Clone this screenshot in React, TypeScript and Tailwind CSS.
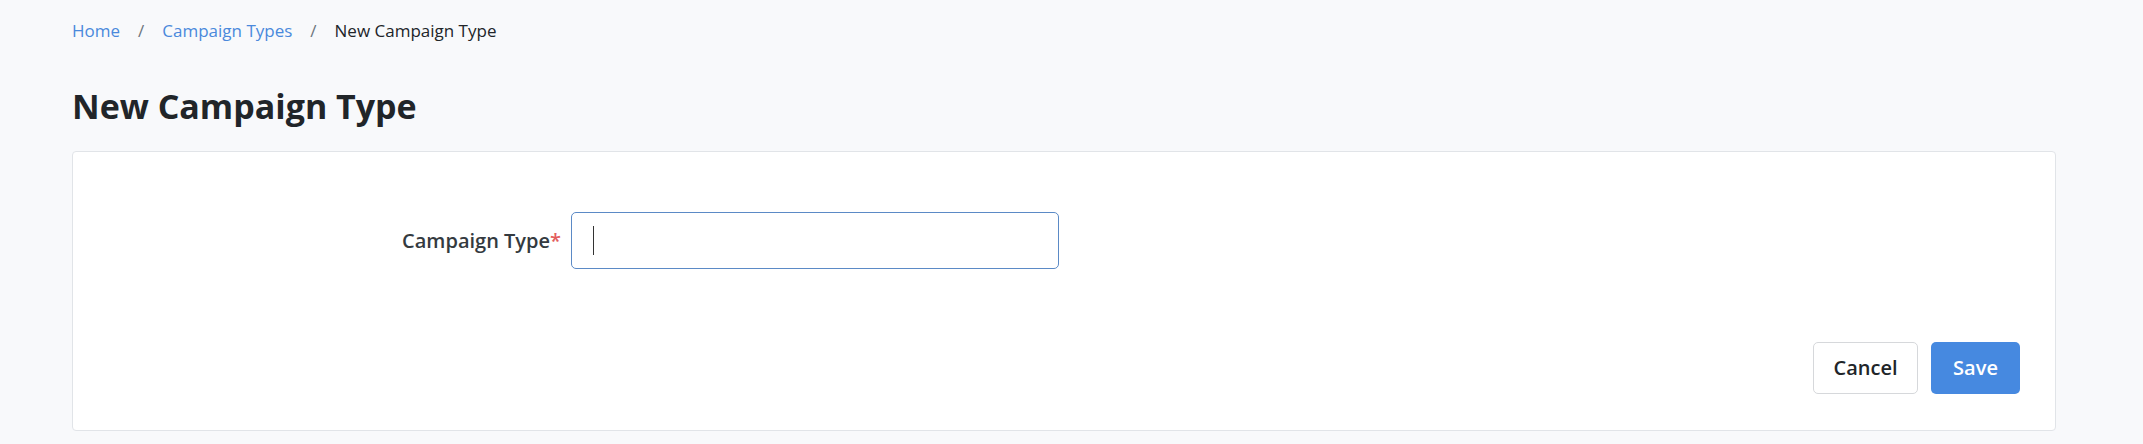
export default function App() {
  const font = { fontFamily: '"Open Sans", "Noto Sans", "Liberation Sans", sans-serif' };
  return (
    <div className="min-h-[444px] w-full bg-[#f8f9fb] pl-[72px] pr-[87px] pt-[19px]" style={font}>
      <nav className="flex h-[24px] items-center text-[17px] leading-[24px]">
        <a className="text-[#4a89dc]">Home</a>
        <span className="mx-[18px] text-[#6c757d]">/</span>
        <a className="text-[#4a89dc]">Campaign Types</a>
        <span className="mx-[18px] text-[#6c757d]">/</span>
        <span className="text-[#212529]">New Campaign Type</span>
      </nav>
      <h1 className="mt-[42px] h-[42px] text-[34px] font-bold leading-[42px] text-[#212529]">New Campaign Type</h1>
      <div className="mt-[24px] flex h-[280px] flex-col rounded-[4px] border border-[#e1e4e8] bg-white pt-[60px] pb-[36px] pr-[35px]">
        <div className="flex items-center">
          <label className="w-[498px] pr-[10px] text-right text-[20px] font-semibold text-[#343a40]">
            Campaign Type<span className="text-[#e35d5d]">*</span>
          </label>
          <div className="flex h-[57px] w-[488px] items-center rounded-[5px] border border-[#5b8ac6] bg-white pl-[21px]">
            <span className="h-[29px] w-[1px] bg-[#333]" />
          </div>
        </div>
        <div className="mt-auto flex justify-end gap-[13px]">
          <button className="h-[52px] w-[105px] rounded-[5px] border border-[#d6d8db] bg-white text-[20px] font-semibold text-[#212529]">
            Cancel
          </button>
          <button className="h-[52px] w-[89px] rounded-[5px] bg-[#4689e0] text-[20px] font-semibold text-white">
            Save
          </button>
        </div>
      </div>
    </div>
  );
}
